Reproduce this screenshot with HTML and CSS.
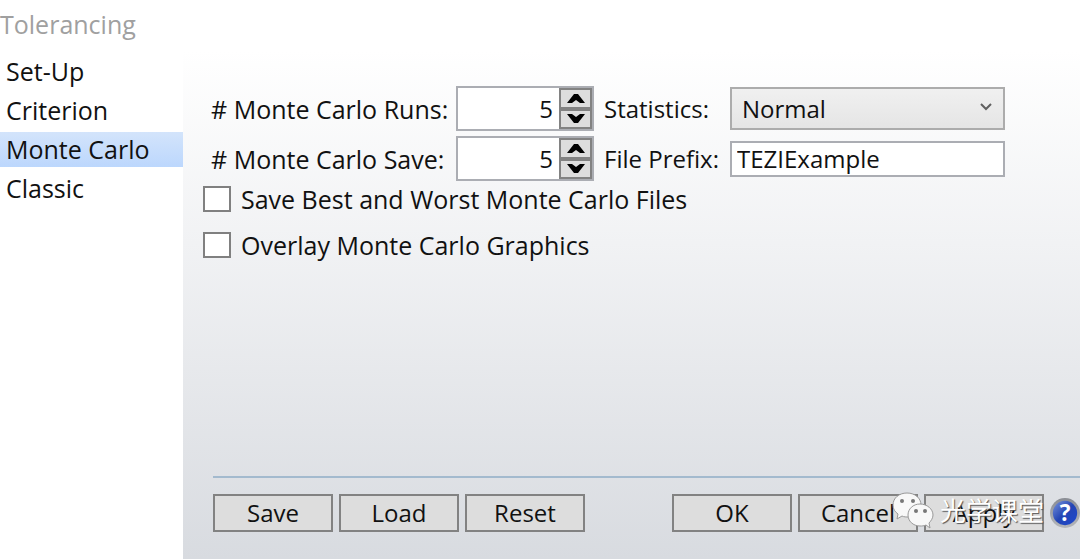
FILE: index.html
```html
<!DOCTYPE html>
<html lang="en">
<head>
  <meta charset="utf-8">
  <title>Tolerancing</title>
  <link rel="stylesheet" href="styles.css">
</head>
<body>
  <header>
    <h1>Tolerancing</h1>
  </header>

  <div class="dialog">
    <nav>
      <ul>
        <li><a href="#">Set-Up</a></li>
        <li><a href="#">Criterion</a></li>
        <li><a href="#" class="active">Monte Carlo</a></li>
        <li><a href="#">Classic</a></li>
      </ul>
    </nav>

    <main>
      <form id="monte-carlo-form">
        <div class="fields">
          <label for="runs"># Monte Carlo Runs:</label>
          <div class="spinner">
            <input type="text" id="runs" name="runs" value="5">
            <div class="steps">
              <button type="button" aria-label="More runs"><svg viewBox="0 0 18 10"><path d="M0 10 L7 1 H11 L18 10 H13 L9 7 L5 10 Z"/></svg></button>
              <button type="button" aria-label="Fewer runs"><svg viewBox="0 0 18 10"><path d="M0 0 L7 9 H11 L18 0 H13 L9 3 L5 0 Z"/></svg></button>
            </div>
          </div>
          <label for="statistics">Statistics:</label>
          <div class="dropdown">
            <select id="statistics" name="statistics">
              <option>Normal</option>
              <option>Uniform</option>
              <option>Parabolic</option>
            </select>
            <svg viewBox="0 0 12 8"><path d="M1 1 L6 6 L11 1"/></svg>
          </div>

          <label for="save-count"># Monte Carlo Save:</label>
          <div class="spinner">
            <input type="text" id="save-count" name="save-count" value="5">
            <div class="steps">
              <button type="button" aria-label="Save more"><svg viewBox="0 0 18 10"><path d="M0 10 L7 1 H11 L18 10 H13 L9 7 L5 10 Z"/></svg></button>
              <button type="button" aria-label="Save fewer"><svg viewBox="0 0 18 10"><path d="M0 0 L7 9 H11 L18 0 H13 L9 3 L5 0 Z"/></svg></button>
            </div>
          </div>
          <label for="prefix">File Prefix:</label>
          <input type="text" id="prefix" name="prefix" class="text-box" value="TEZIExample">
        </div>

        <div class="options">
          <label><input type="checkbox" name="save-best-worst">Save Best and Worst Monte Carlo Files</label>
          <label><input type="checkbox" name="overlay">Overlay Monte Carlo Graphics</label>
        </div>
      </form>

      <footer>
        <div class="buttons">
          <button type="button">Save</button>
          <button type="button">Load</button>
          <button type="reset" form="monte-carlo-form">Reset</button>
        </div>
        <div class="buttons">
          <button type="button">OK</button>
          <button type="button">Cancel</button>
          <button type="button">Apply</button>
          <button type="button" class="help" aria-label="Help">
            <svg viewBox="0 0 32 32">
              <defs>
                <linearGradient id="ring" x1="0" y1="0" x2="0" y2="1">
                  <stop offset="0" stop-color="#8a8d94"/>
                  <stop offset="1" stop-color="#b4b6ba"/>
                </linearGradient>
                <linearGradient id="ball" x1="0" y1="0" x2="1" y2="1">
                  <stop offset="0" stop-color="#7894dc"/>
                  <stop offset="0.5" stop-color="#2445b4"/>
                  <stop offset="1" stop-color="#1c48d0"/>
                </linearGradient>
              </defs>
              <circle cx="16" cy="16" r="16" fill="url(#ring)"/>
              <circle cx="16" cy="16" r="13" fill="url(#ball)"/>
              <text x="16" y="24" text-anchor="middle">?</text>
            </svg>
          </button>
        </div>

        <div class="watermark">
          <svg viewBox="0 0 42 38">
            <path class="bubble" d="M15 2 C7 2 1 7 1 14 C1 18 3 21 6 23 L5 28 L10 25 C12 26 14 26 17 26 C24 26 29 20 29 14 C29 7 23 2 15 2 Z"/>
            <path class="bubble" d="M28 13 C21 13 16 18 16 24 C16 30 21 35 28 35 C30 35 32 35 34 34 L38 37 L37 32 C39 30 41 27 41 24 C41 18 35 13 28 13 Z"/>
            <circle cx="10" cy="10" r="2"/>
            <circle cx="21" cy="10" r="2"/>
            <circle cx="24" cy="20" r="2"/>
            <circle cx="33" cy="20" r="2"/>
          </svg>
          <span>光学课堂</span>
        </div>
      </footer>
    </main>
  </div>
</body>
</html>
```

FILE: styles.css
```css
* {
  box-sizing: border-box;
}

body {
  display: flex;
  flex-direction: column;
  min-height: 100vh;
  margin: 0;
  background-color: #fff;
  color: #111;
  font-family: 'Open Sans', 'Noto Sans', sans-serif;
  font-size: 25px;
  line-height: 32px;
}

input, select, button {
  font: inherit;
  font-size: 24px;
  color: inherit;
  border-radius: 0;
  margin: 0;
}

header {
  padding: 8px 0 10px;
}

header h1 {
  margin: 0;
  color: #a0a0a0;
  font-size: 25px;
  font-weight: normal;
}

.dialog {
  flex: 1;
  display: grid;
  grid-template-columns: 183px 1fr;
}

nav ul {
  list-style-type: none;
  margin: 0;
  padding: 4px 0 0;
  display: flex;
  flex-direction: column;
  gap: 4px;
}

nav a {
  display: block;
  height: 35px;
  padding: 1px 6px;
  color: #111;
  text-decoration: none;
}

nav a.active {
  background: linear-gradient(#d3e4fb, #bcd7fd);
}

main {
  display: flex;
  flex-direction: column;
  justify-content: space-between;
  padding: 36px 0 27px 20px;
  background: linear-gradient(#fff, #f1f2f4 38%, #d8dbe0);
}

.fields {
  display: grid;
  grid-template-columns: 245px 138px 136px 275px;
  align-items: center;
  row-gap: 5px;
  padding-left: 8px;
}

.fields label:nth-of-type(even) {
  padding-left: 10px;
  font-size: 24px;
}

.spinner {
  display: flex;
  height: 45px;
  border: 2px solid #abadb3;
  background-color: #fff;
}

.spinner input {
  flex: 1;
  min-width: 0;
  padding: 0 6px;
  border: 0;
  text-align: right;
}

.steps {
  display: flex;
  flex-direction: column;
  width: 33px;
}

.steps button {
  flex: 1;
  display: flex;
  align-items: center;
  justify-content: center;
  padding: 0;
  border: 2px solid #828282;
  background-color: #ddd;
}

.steps svg {
  width: 18px;
  height: 10px;
}

.dropdown {
  position: relative;
}

.dropdown select {
  display: block;
  width: 100%;
  height: 43px;
  padding: 0 10px;
  border: 2px solid #acacac;
  background: linear-gradient(#f0f0f0, #e5e5e5);
  appearance: none;
}

.dropdown svg {
  position: absolute;
  right: 13px;
  top: 16px;
  width: 12px;
  height: 8px;
  fill: none;
  stroke: #606060;
  stroke-width: 2;
  pointer-events: none;
}

.text-box {
  width: 100%;
  height: 36px;
  padding: 0 5px;
  border: 2px solid #abadb3;
  background-color: #fff;
}

.options {
  display: flex;
  flex-direction: column;
  gap: 14px;
  padding-top: 2px;
}

.options label {
  display: flex;
  align-items: center;
  gap: 10px;
}

.options input {
  width: 28px;
  height: 26px;
  border: 2px solid #808080;
  background-color: #fff;
  appearance: none;
}

footer {
  position: relative;
  display: flex;
  justify-content: space-between;
  margin-left: 10px;
  padding-top: 16px;
  border-top: 2px solid #a3bace;
}

.buttons {
  display: flex;
  align-items: center;
  gap: 6px;
}

.buttons button {
  width: 120px;
  height: 38px;
  padding: 0;
  border: 2px solid #828282;
  background-color: #ddd;
}

.buttons .help {
  width: 30px;
  height: 30px;
  border: 0;
  background: none;
}

.help svg {
  display: block;
  width: 30px;
  height: 30px;
}

.help text {
  fill: #fff;
  font-size: 24px;
  font-weight: bold;
}

/* Account mark, lies over the buttons */
.watermark {
  position: absolute;
  right: 36px;
  bottom: 3px;
  display: flex;
  align-items: center;
  gap: 6px;
  color: #fff;
  font-family: 'Noto Sans CJK SC', sans-serif;
  font-size: 26px;
  text-shadow: 1px 1px 1px #555;
  pointer-events: none;
}

.watermark svg {
  width: 42px;
  height: 38px;
  fill: #777;
}

.watermark .bubble {
  fill: #f8f8f8;
  stroke: #999;
  stroke-width: 1;
}
```
